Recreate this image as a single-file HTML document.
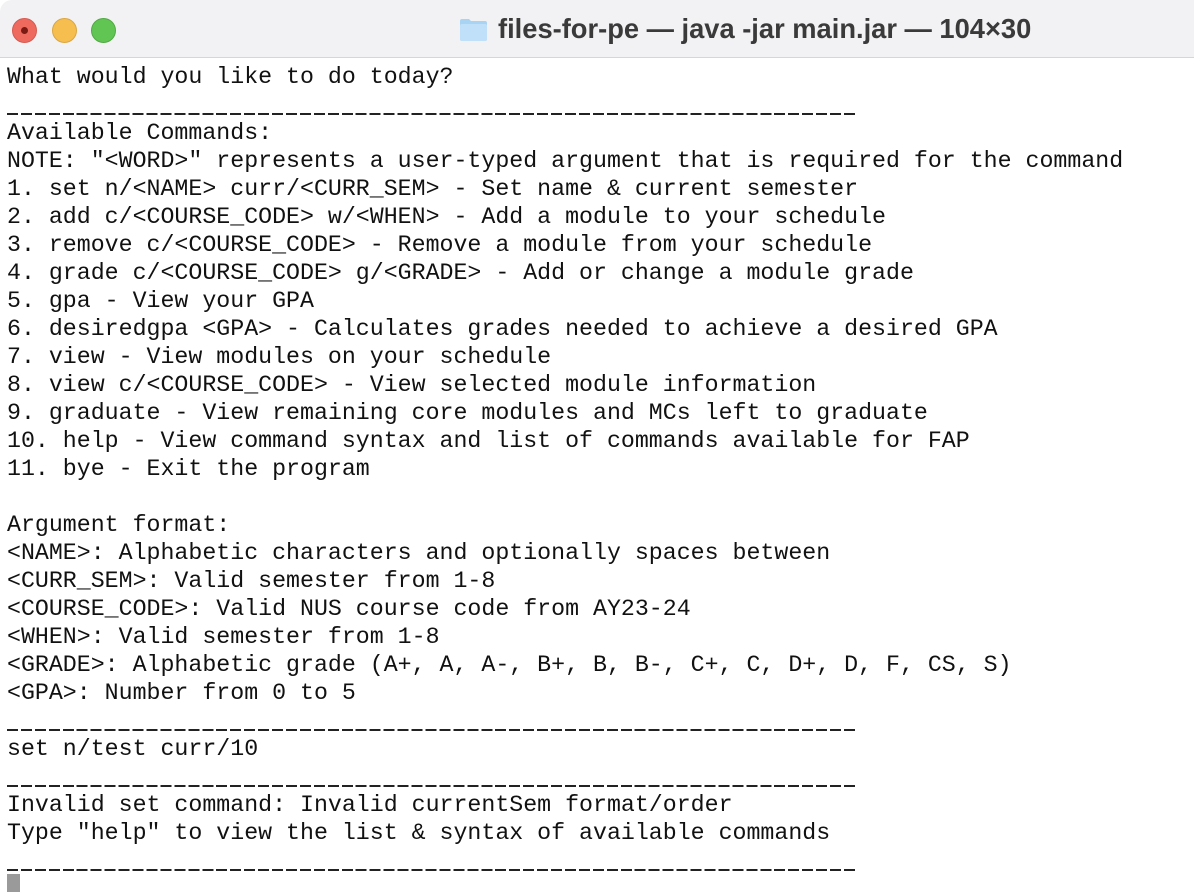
<!DOCTYPE html>
<html><head><meta charset="utf-8"><style>
html,body{margin:0;padding:0;width:1194px;height:892px;overflow:hidden;background:#fff;}
.bar{position:absolute;left:0;top:0;width:1194px;height:57px;background:#f2f2f4;border-bottom:1px solid #d6d6d6;border-top-left-radius:12px;}
.dot{position:absolute;top:18px;width:23px;height:23px;border-radius:50%;}
.title{position:absolute;left:498px;top:13px;font:bold 27.3px "Liberation Sans",sans-serif;color:#3a3a3a;white-space:nowrap;}
.folder{position:absolute;left:459px;top:17px;width:29px;height:25px;}
pre{position:absolute;left:7px;top:63px;margin:0;font-family:"Liberation Mono",monospace;font-size:23.25px;line-height:28px;color:#111;}
.u{display:inline-block;width:851px;height:28px;vertical-align:top;background:repeating-linear-gradient(90deg,#222 0 11px,transparent 11px 13.95px) 0 22px/851px 2px no-repeat;}
.cur{position:absolute;left:7px;top:874px;width:13px;height:18px;background:#9a9a9a;}
</style></head><body>
<div class="bar">
<div class="dot" style="left:12px;background:#ee6a5f;border:1px solid #d55a50;"><div style="position:absolute;left:8px;top:8px;width:7px;height:7px;border-radius:50%;background:#7a1a12"></div></div>
<div class="dot" style="left:52px;background:#f5be4f;border:1px solid #dba640;"></div>
<div class="dot" style="left:91px;background:#61c554;border:1px solid #52a944;"></div>
<svg class="folder" viewBox="0 0 29 25"><path d="M1 4 Q1 2 3 2 H10 L12 4 H26 Q28 4 28 6 V22 Q28 24 26 24 H3 Q1 24 1 22 Z" fill="#a9d3f2"/><rect x="1" y="7" width="27" height="17" rx="2" fill="#bfe0f8"/></svg>
<div class="title">files-for-pe — java -jar main.jar — 104×30</div>
</div>
<pre>What would you like to do today?
<span class="u"></span>
Available Commands:
NOTE: "&lt;WORD&gt;" represents a user-typed argument that is required for the command
1. set n/&lt;NAME&gt; curr/&lt;CURR_SEM&gt; - Set name &amp; current semester
2. add c/&lt;COURSE_CODE&gt; w/&lt;WHEN&gt; - Add a module to your schedule
3. remove c/&lt;COURSE_CODE&gt; - Remove a module from your schedule
4. grade c/&lt;COURSE_CODE&gt; g/&lt;GRADE&gt; - Add or change a module grade
5. gpa - View your GPA
6. desiredgpa &lt;GPA&gt; - Calculates grades needed to achieve a desired GPA
7. view - View modules on your schedule
8. view c/&lt;COURSE_CODE&gt; - View selected module information
9. graduate - View remaining core modules and MCs left to graduate
10. help - View command syntax and list of commands available for FAP
11. bye - Exit the program

Argument format:
&lt;NAME&gt;: Alphabetic characters and optionally spaces between
&lt;CURR_SEM&gt;: Valid semester from 1-8
&lt;COURSE_CODE&gt;: Valid NUS course code from AY23-24
&lt;WHEN&gt;: Valid semester from 1-8
&lt;GRADE&gt;: Alphabetic grade (A+, A, A-, B+, B, B-, C+, C, D+, D, F, CS, S)
&lt;GPA&gt;: Number from 0 to 5
<span class="u"></span>
set n/test curr/10
<span class="u"></span>
Invalid set command: Invalid currentSem format/order
Type "help" to view the list &amp; syntax of available commands
<span class="u"></span></pre>
<div class="cur"></div>
</body></html>
